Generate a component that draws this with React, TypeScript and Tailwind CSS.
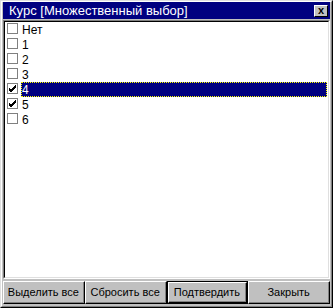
import React from "react";

const items = [
  { label: "Нет", checked: false },
  { label: "1", checked: false },
  { label: "2", checked: false },
  { label: "3", checked: false },
  { label: "4", checked: true, selected: true },
  { label: "5", checked: true },
  { label: "6", checked: false },
];

function Box({ checked }: { checked: boolean }) {
  return (
    <div className="w-[11px] h-[11px] mt-[1px] border border-[#808080] bg-white flex items-center justify-center shrink-0">
      {checked && (
        <svg width="9" height="9" viewBox="0 0 9 9">
          <path d="M1 4 L3 6 L8 1 M1 5 L3 7 L8 2 M1 6 L3 8 L8 3" stroke="#000" strokeWidth="1" fill="none" shapeRendering="crispEdges" />
        </svg>
      )}
    </div>
  );
}

function Btn({ label, def }: { label: string; def?: boolean }) {
  return (
    <div className={def ? "border border-black flex" : "flex"}>
      <div className="flex-1 border-t border-l border-white border-r border-b border-r-black border-b-black">
        <div className="h-full border-r border-b border-[#808080] flex items-center justify-center text-black text-[11px]">
          {label}
        </div>
      </div>
    </div>
  );
}

export default function App() {
  return (
    <div
      className="w-[333px] h-[308px] bg-[#c0c0c0] border-t border-l border-[#dfdfdf] border-r border-b border-r-black border-b-black"
      style={{ fontFamily: '"Liberation Sans", Arial, sans-serif' }}
    >
      <div className="w-full h-full border-t border-l border-white border-r border-b border-r-[#808080] border-b-[#808080] flex flex-col px-[1px] pt-[0px] pb-[2px]">
        <div className="h-[17px] bg-[#000080] flex items-center justify-between pl-[6px] pr-[2px]">
          <span className="text-white text-[13px] leading-none">Курс [Множественный выбор]</span>
          <div className="w-[14px] h-[12px] bg-[#c0c0c0] border-t border-l border-white border-r border-b border-r-black border-b-black flex items-center justify-center">
            <span className="text-black text-[11px] font-bold leading-none">x</span>
          </div>
        </div>
        <div className="flex-1 mt-[1px] border-t border-l border-[#808080] border-r border-b border-r-white border-b-white flex">
          <div className="flex-1 border-t border-l border-black border-r border-b border-r-[#dfdfdf] border-b-[#dfdfdf] bg-white pl-[2px] pr-[1px]">
            {items.map((it) => (
              <div key={it.label} className="h-[15px] flex items-start">
                <Box checked={it.checked} />
                <div
                  className={
                    it.selected
                      ? "ml-[3px] flex-1 h-[15px] bg-[#000080] text-white border border-dotted border-[#ffff00] flex items-center text-[12px]"
                      : "ml-[4px] h-[15px] flex items-center text-[12px] text-black"
                  }
                >
                  {it.label}
                </div>
              </div>
            ))}
          </div>
        </div>
        <div className="h-[23px] mt-[2px] grid grid-cols-4">
          <Btn label="Выделить все" />
          <Btn label="Сбросить все" />
          <Btn label="Подтвердить" def />
          <Btn label="Закрыть" />
        </div>
      </div>
    </div>
  );
}
